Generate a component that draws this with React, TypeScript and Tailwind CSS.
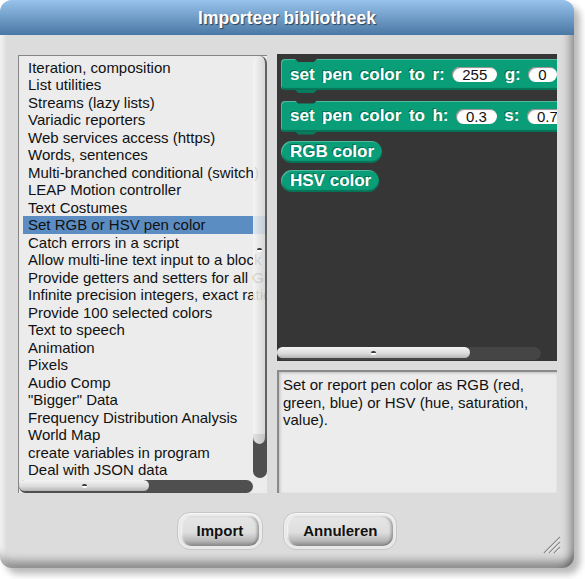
import React from "react";

const items = [
  "Iteration, composition",
  "List utilities",
  "Streams (lazy lists)",
  "Variadic reporters",
  "Web services access (https)",
  "Words, sentences",
  "Multi-branched conditional (switch)",
  "LEAP Motion controller",
  "Text Costumes",
  "Set RGB or HSV pen color",
  "Catch errors in a script",
  "Allow multi-line text input to a block",
  "Provide getters and setters for all GUI-settable attributes",
  "Infinite precision integers, exact rationals, complex",
  "Provide 100 selected colors",
  "Text to speech",
  "Animation",
  "Pixels",
  "Audio Comp",
  "\"Bigger\" Data",
  "Frequency Distribution Analysis",
  "World Map",
  "create variables in program",
  "Deal with JSON data",
  "Parallelization",
  "String processing",
];

function Grip() {
  return (
    <div className="flex flex-col items-center">
      <div className="h-[2px] w-[5px] rounded-t-full bg-[#3a3a3a]" />
      <div className="h-[2px] w-[5px] rounded-b-full bg-white" />
    </div>
  );
}

function Slot({ v }: { v: string }) {
  return (
    <div className="flex h-[15px] items-center rounded-full bg-white px-[10px] text-[15px] font-normal leading-[15px] text-[#111] [text-shadow:none] shadow-[inset_1px_1px_1px_rgba(0,0,0,0.45)]">
      {v}
    </div>
  );
}

function Cmd({ children }: { children: React.ReactNode }) {
  return (
    <div className="relative flex h-[31px] w-max items-center gap-[7.5px] rounded-[4px] bg-[#0a9e78] pl-[9px] pr-[30px] text-[17px] font-bold text-white [text-shadow:-1px_-1px_0_rgba(0,0,0,0.35)] shadow-[inset_1px_1px_0_rgba(255,255,255,0.28),inset_0_-2px_1px_rgba(0,0,0,0.28)]">
      <div className="absolute left-[14px] top-0 h-[3px] w-[22px] bg-[#363636] [clip-path:polygon(0_0,100%_0,85%_100%,15%_100%)]" />
      <div className="absolute left-[14px] top-full h-[3px] w-[22px] bg-[#087c5f] [clip-path:polygon(0_0,100%_0,85%_100%,15%_100%)]" />
      {children}
    </div>
  );
}

function Reporter({ label }: { label: string }) {
  return (
    <div className="flex h-[22px] w-max items-center rounded-full bg-[#0a9e78] pl-[9px] pr-[8px] text-[17px] font-bold text-white [text-shadow:-1px_-1px_0_rgba(0,0,0,0.35)] shadow-[inset_1px_1px_0_rgba(255,255,255,0.28),inset_0_-2px_1px_rgba(0,0,0,0.28)]">
      {label}
    </div>
  );
}

function Btn({ label }: { label: string }) {
  return (
    <div className="rounded-[13px] border border-[#c6c6c6] bg-[#e9e9e9] p-[3px] shadow-[inset_0_1px_2px_rgba(255,255,255,0.9)]">
      <div className="flex h-[30px] items-center rounded-[10px] bg-[linear-gradient(to_bottom,#e6e6e6_0%,#dedede_55%,#b8b8b8_82%,#8a8a8a_100%)] px-4 text-[15px] font-bold text-[#111] shadow-[inset_-3px_0_3px_-1px_rgba(0,0,0,0.3),inset_2px_0_2px_-1px_rgba(255,255,255,0.8)]">
        {label}
      </div>
    </div>
  );
}

export default function App() {
  return (
    <div className="h-[579px] w-[585px] bg-white font-['Liberation_Sans',Arial,sans-serif]">
      <div className="relative flex h-[568px] w-[574px] flex-col rounded-[12px] bg-[#dcdcdc] shadow-[6px_6px_7px_rgba(0,0,0,0.28),inset_-10px_0_8px_-6px_rgba(0,0,0,0.35),inset_0_-13px_8px_-6px_rgba(0,0,0,0.35),inset_6px_0_5px_-3px_rgba(255,255,255,0.85)]">
        <div className="flex h-[35px] items-center justify-center rounded-t-[12px] bg-[linear-gradient(to_bottom,#97c3ec,#4a78a4)] pt-[1px] text-[17.5px] font-bold text-white [text-shadow:1px_1px_1px_rgba(0,0,0,0.55)]">
          Importeer bibliotheek
        </div>

        <div className="flex gap-[10px] pl-[18px] pt-[19px]">
          {/* library list */}
          <div className="relative mt-[1px] h-[438px] w-[249px] overflow-hidden border-l border-t border-[#858585] bg-[#ececec] text-[15px] leading-[17.5px] text-[#111]">
            <div className="ml-[4px] pt-[2.5px]">
              {items.map((it, i) => (
                <div
                  key={i}
                  className={
                    i === 9
                      ? "h-[17.5px] whitespace-nowrap bg-[#5c8dc2] pl-[5px]"
                      : "h-[17.5px] whitespace-nowrap pl-[5px]"
                  }
                >
                  {it}
                </div>
              ))}
            </div>
            {/* vertical scrollbar */}
            <div className="absolute right-0 top-0 h-[422px] w-[14px]">
              <div className="absolute bottom-0 left-0 top-[378px] w-[14px] rounded-b-full bg-[#4f4f4f]" />
              <div className="absolute left-0 top-0 flex h-[388px] w-[14px] items-center justify-center rounded-full border-r-2 border-[rgba(60,60,60,0.8)] bg-[linear-gradient(to_right,rgba(246,246,246,0.88),rgba(212,212,212,0.88))]">
                <Grip />
              </div>
            </div>
            {/* horizontal scrollbar */}
            <div className="absolute bottom-0 left-0 h-[13px] w-[234px] rounded-full bg-[#4f4f4f]">
              <div className="flex h-[11px] w-[130px] items-center justify-center rounded-full bg-[linear-gradient(to_bottom,#f4f4f4,#dadada_60%,#b4b4b4)]">
                <Grip />
              </div>
            </div>
          </div>

          {/* right column */}
          <div className="flex w-[280px] flex-col gap-[9px]">
            <div className="relative h-[307px] overflow-hidden bg-[#363636] pl-[4px] pt-[5px]">
              <Cmd>
                <span>set</span>
                <span>pen</span>
                <span>color</span>
                <span>to</span>
                <span>r:</span>
                <Slot v="255" />
                <span>g:</span>
                <Slot v="0" />
                <span>b:</span>
                <Slot v="0" />
              </Cmd>
              <div className="mt-[10.5px]">
                <Cmd>
                  <span>set</span>
                  <span>pen</span>
                  <span>color</span>
                  <span>to</span>
                  <span>h:</span>
                  <Slot v="0.3" />
                  <span>s:</span>
                  <Slot v="0.7" />
                  <span>v:</span>
                  <Slot v="0.6" />
                </Cmd>
              </div>
              <div className="mt-[9.5px]">
                <Reporter label="RGB color" />
              </div>
              <div className="mt-[6.5px]">
                <Reporter label="HSV color" />
              </div>
              {/* horizontal scrollbar */}
              <div className="absolute bottom-[1px] left-0 h-[13px] w-[264px] rounded-full bg-[#454545]">
                <div className="flex h-[11px] w-[193px] items-center justify-center rounded-full bg-[linear-gradient(to_bottom,#f4f4f4,#dadada_60%,#b4b4b4)]">
                  <Grip />
                </div>
              </div>
            </div>
            <div className="h-[123px] border-l-2 border-t-2 border-[#8a8a8a] bg-[#ececec] pl-[4px] pr-[8px] pt-[4px] text-[15px] leading-[17.5px] text-[#111] shadow-[inset_1px_1px_3px_rgba(0,0,0,0.2)]">
              Set or report pen color as RGB (red, green, blue) or HSV (hue, saturation, value).
            </div>
          </div>
        </div>

        <div className="flex justify-center gap-5 pt-[19px]">
          <Btn label="Import" />
          <Btn label="Annuleren" />
        </div>

        <svg
          className="absolute bottom-[14px] right-[13px]"
          width="19"
          height="19"
          viewBox="0 0 19 19"
        >
          <path d="M18 2 L2 18 M18 7 L7 18 M18 12 L12 18" stroke="#8c8c8c" strokeWidth="1.3" />
          <path d="M18 3.5 L3.5 18 M18 8.5 L8.5 18 M18 13.5 L13.5 18" stroke="#f4f4f4" strokeWidth="1" />
        </svg>
      </div>
    </div>
  );
}
